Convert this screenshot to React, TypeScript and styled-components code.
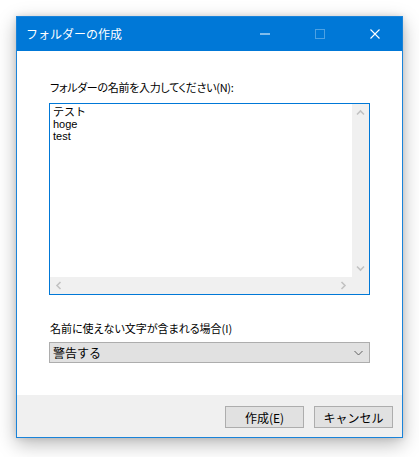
import React from "react";
import styled, { createGlobalStyle } from "styled-components";

const GlobalStyle = createGlobalStyle`
  html, body { margin: 0; padding: 0; background: #ffffff; }
  body { font-family: "Noto Sans CJK JP", "Noto Sans", sans-serif; }
  * { box-sizing: border-box; }
`;

const Page = styled.div`
  padding: 16px 0 0 16px;
  width: 419px;
  height: 457px;
`;

const Window = styled.div`
  width: 387px;
  height: 422px;
  border: 1px solid #1a83d9;
  display: flex;
  flex-direction: column;
  box-shadow: 0 6px 18px rgba(0, 0, 0, 0.28), 0 0 6px rgba(0, 0, 0, 0.12);
  background: #fff;
`;

const TitleBar = styled.div`
  height: 34px;
  background: #0078d7;
  display: flex;
  align-items: center;
  color: #fff;
`;

const Title = styled.div`
  flex: 1;
  padding-left: 9px;
  font-size: 12px;
  line-height: 16px;
  color: #ffffff;
`;

const CaptionButton = styled.div`
  width: 55px;
  height: 34px;
  display: flex;
  align-items: center;
  justify-content: center;
`;

const Content = styled.div`
  flex: 1;
  padding: 28px 32px 0 32px;
  display: flex;
  flex-direction: column;
`;

const Label = styled.div<{ $top?: number; $spacing?: number }>`
  font-size: 11px;
  line-height: 16px;
  color: #000;
  padding-left: 1px;
  margin-top: ${(p) => p.$top ?? 0}px;
  letter-spacing: ${(p) => p.$spacing ?? 0}px;
  font-feature-settings: "palt";
  white-space: nowrap;
`;

const TextBox = styled.div`
  margin-top: 8px;
  width: 321px;
  height: 192px;
  border: 1px solid #0078d7;
  display: grid;
  grid-template-columns: 1fr 17px;
  grid-template-rows: 1fr 17px;
  background: #fff;
`;

const TextArea = styled.div`
  padding: 2px 3px;
  font-family: "Liberation Sans", "Noto Sans CJK JP", sans-serif;
  font-size: 11px;
  color: #000;
  display: flex;
  flex-direction: column;
`;

const Line = styled.div`
  height: 12px;
  line-height: 12px;
  white-space: nowrap;
`;

const ScrollBar = styled.div<{ $vertical?: boolean }>`
  background: #f0f0f0;
  display: flex;
  flex-direction: ${(p) => (p.$vertical ? "column" : "row")};
  justify-content: space-between;
  align-items: center;
`;

const ArrowCell = styled.div`
  width: 17px;
  height: 17px;
  display: flex;
  align-items: center;
  justify-content: center;
`;

const Corner = styled.div`
  background: #f0f0f0;
`;

const Combo = styled.div`
  margin-top: 6px;
  width: 321px;
  height: 21px;
  border: 1px solid #adadad;
  background: #e1e1e1;
  display: flex;
  align-items: center;
  justify-content: space-between;
  padding: 0 6px 0 3px;
  font-size: 12px;
  color: #000;
`;

const Footer = styled.div`
  height: 42px;
  background: #f0f0f0;
  display: flex;
  justify-content: flex-end;
  align-items: flex-start;
  padding: 11px 9px 0 0;
  gap: 10px;
`;

const Button = styled.div`
  width: 79px;
  height: 22px;
  border: 1px solid #adadad;
  background: #e1e1e1;
  display: flex;
  align-items: center;
  justify-content: center;
  font-size: 12px;
  color: #000;
`;

const Chevron: React.FC<{ dir: "up" | "down" | "left" | "right"; color?: string }> = ({
  dir,
  color = "#c2c2c2",
}) => {
  const rot = { up: 0, right: 90, down: 180, left: 270 }[dir];
  return (
    <svg width="9" height="9" viewBox="0 0 9 9" style={{ transform: `rotate(${rot}deg)` }}>
      <path d="M1 6.5 L4.5 3 L8 6.5" fill="none" stroke={color} strokeWidth="1.6" />
    </svg>
  );
};

export default function App() {
  return (
    <Page>
      <GlobalStyle />
      <Window>
        <TitleBar>
          <Title>フォルダーの作成</Title>
          <CaptionButton>
            <svg width="10" height="10" viewBox="0 0 10 10">
              <rect x="0" y="4.5" width="10" height="1" fill="#ffffff" />
            </svg>
          </CaptionButton>
          <CaptionButton>
            <svg width="10" height="10" viewBox="0 0 10 10">
              <rect x="0.5" y="0.5" width="9" height="9" fill="none" stroke="#4da1e3" strokeWidth="1" />
            </svg>
          </CaptionButton>
          <CaptionButton>
            <svg width="10" height="10" viewBox="0 0 10 10">
              <path d="M0.5 0.5 L9.5 9.5 M9.5 0.5 L0.5 9.5" stroke="#ffffff" strokeWidth="1.1" />
            </svg>
          </CaptionButton>
        </TitleBar>
        <Content>
          <Label $spacing={-0.3}>フォルダーの名前を入力してください(N):</Label>
          <TextBox>
            <TextArea>
              <Line>テスト</Line>
              <Line>hoge</Line>
              <Line>test</Line>
            </TextArea>
            <ScrollBar $vertical>
              <ArrowCell>
                <Chevron dir="up" />
              </ArrowCell>
              <ArrowCell>
                <Chevron dir="down" />
              </ArrowCell>
            </ScrollBar>
            <ScrollBar>
              <ArrowCell>
                <Chevron dir="left" />
              </ArrowCell>
              <ArrowCell>
                <Chevron dir="right" />
              </ArrowCell>
            </ScrollBar>
            <Corner />
          </TextBox>
          <Label $top={25}>名前に使えない文字が含まれる場合(I)</Label>
          <Combo>
            <span>警告する</span>
            <svg width="9" height="6" viewBox="0 0 9 6">
              <path d="M0.5 1 L4.5 5 L8.5 1" fill="none" stroke="#606060" strokeWidth="1" />
            </svg>
          </Combo>
        </Content>
        <Footer>
          <Button>作成(E)</Button>
          <Button>キャンセル</Button>
        </Footer>
      </Window>
    </Page>
  );
}
